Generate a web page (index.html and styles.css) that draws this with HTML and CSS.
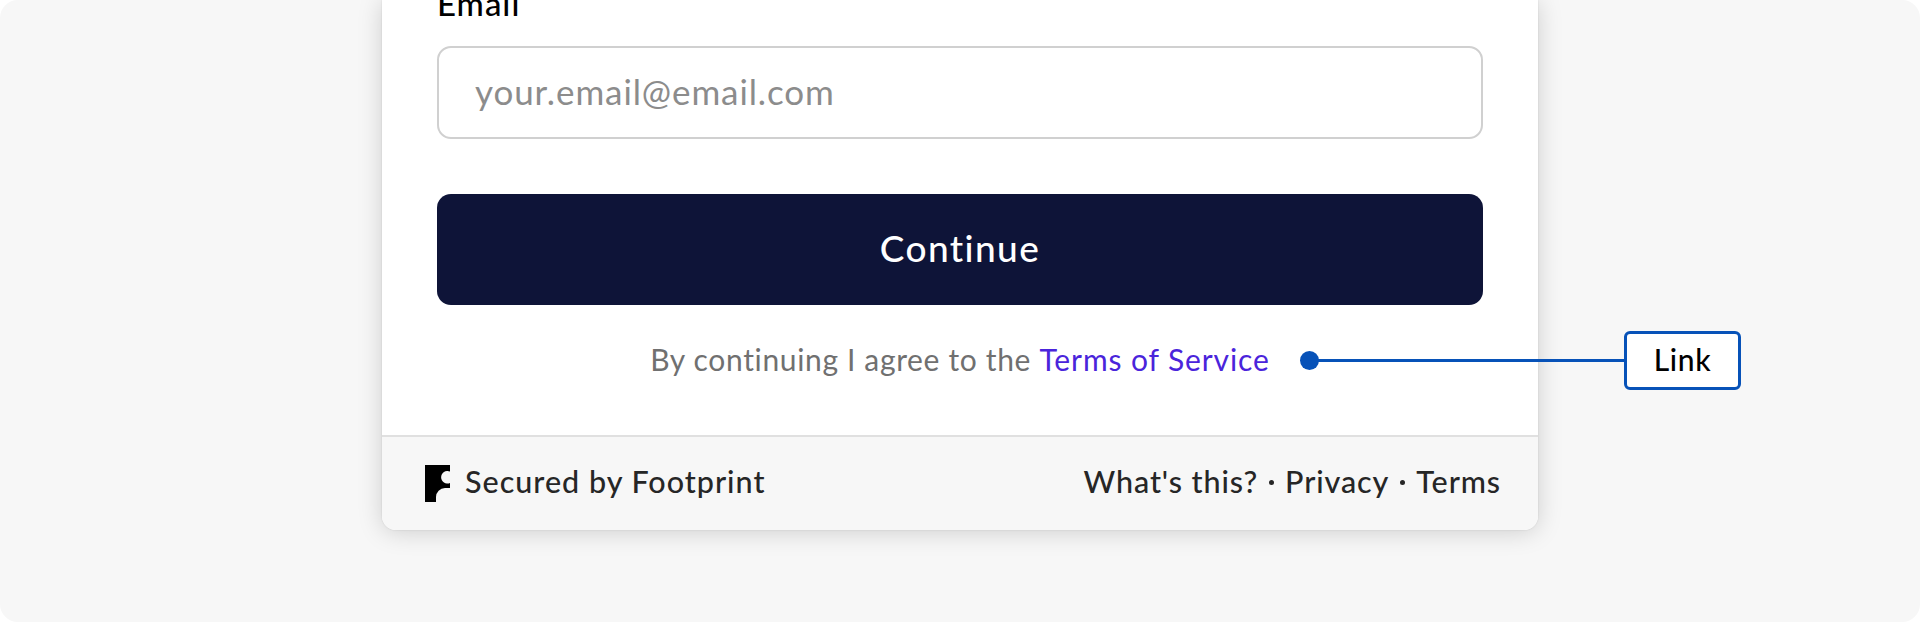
FILE: index.html
```
<!DOCTYPE html>
<html lang="en">
<head>
<meta charset="UTF-8" />
<title>Footprint</title>
<link rel="stylesheet" href="styles.css">
</head>
<body>
<main class="frame">
  <section class="card">
    <form class="form">
      <label class="label" for="email">Email</label>
      <input class="input" id="email" type="email" placeholder="your.email@email.com">
      <button class="button" type="button">Continue</button>
      <p class="agree">By continuing I agree to the <a class="agree-link" href="#">Terms of Service</a></p>
    </form>
    <footer class="footer">
      <div class="secured">
        <svg class="logo" viewBox="0 0 25 37" width="25" height="37">
          <path d="M0 0H25V6.5A6.3 6.3 0 1 0 25 18V23H20A9 9 0 0 0 11 32V37H0Z" />
        </svg>
        <span class="secured-text">Secured by Footprint</span>
      </div>
      <nav class="links">
        <a href="#">What's this?</a>
        <span class="dot"></span>
        <a href="#">Privacy</a>
        <span class="dot"></span>
        <a href="#">Terms</a>
      </nav>
    </footer>
  </section>
  <div class="callout">
    <span class="callout-dot"></span>
    <span class="callout-line"></span>
    <span class="callout-box">Link</span>
  </div>
</main>
</body>
</html>
```
FILE: styles.css
```
* {
  box-sizing: border-box;
}
body {
  margin: 0;
  background: #fff;
  font-family: Lato, "Open Sans", sans-serif;
}
a {
  color: inherit;
  text-decoration: none;
}
.frame {
  position: relative;
  height: 622px;
  overflow: hidden;
  background: #f7f7f7;
  border-radius: 18px;
}
.card {
  width: 1156px;
  height: 530px;
  margin-left: 382px;
  display: flex;
  flex-direction: column;
  background: #fff;
  border-radius: 0 0 14px 14px;
  box-shadow: 0 0 2px rgb(0 0 0 / 0.12), 0 2px 24px rgb(0 0 0 / 0.17);
}
.form {
  height: 435px;
  padding: 0 55px;
  display: flex;
  flex-direction: column;
}
.label {
  height: 46px;
  margin-top: -16px;
  margin-bottom: 16px;
  line-height: 38px;
  font-size: 33px;
  font-weight: 500;
  letter-spacing: 1px;
  color: #000;
}
.input {
  height: 93px;
  padding: 0 36px 3px;
  border: 2px solid #d0d0d0;
  border-radius: 14px;
  background: #fff;
  font-family: inherit;
  font-size: 35px;
  letter-spacing: 0.9px;
}
.input::placeholder {
  color: #8c8c8c;
}
.button {
  height: 111px;
  margin-top: 55px;
  padding: 0 0 4px;
  border: 0;
  border-radius: 14px;
  background: #0e1438;
  color: #fff;
  font-family: inherit;
  font-size: 37px;
  font-weight: 500;
  letter-spacing: 1.4px;
}
.agree {
  margin: 36px 0 0;
  line-height: 36px;
  font-size: 30px;
  letter-spacing: 0.65px;
  text-align: center;
  white-space: nowrap;
  color: #707070;
}
.agree-link {
  letter-spacing: 0.9px;
  color: #4a24db;
}
.footer {
  height: 95px;
  padding: 0 37px 0 43px;
  display: flex;
  align-items: center;
  justify-content: space-between;
  border-top: 2px solid #e0e0e0;
  border-radius: 0 0 14px 14px;
  background: #f7f7f7;
  font-size: 30.5px;
  font-weight: 500;
  letter-spacing: 0.9px;
  color: #262626;
}
.secured {
  display: flex;
  align-items: center;
  gap: 15px;
}
.secured-text {
  padding-bottom: 5px;
  letter-spacing: 1px;
}
.logo {
  fill: #000;
}
.links {
  padding-bottom: 5px;
  display: flex;
  align-items: center;
}
.dot {
  width: 5px;
  height: 5px;
  margin: 2px 11px 0;
  border-radius: 50%;
  background: #262626;
}
/* annotation drawn over the card edge */
.callout {
  position: absolute;
  left: 1300px;
  top: 331px;
  width: 441px;
  height: 59px;
  display: flex;
  align-items: center;
}
.callout-dot {
  width: 19px;
  height: 19px;
  border-radius: 50%;
  background: #0752b8;
}
.callout-line {
  flex: 1;
  height: 3px;
  margin: 0 -1px;
  background: #0752b8;
}
.callout-box {
  width: 117px;
  height: 59px;
  border: 3px solid #0752b8;
  border-radius: 6px;
  background: #fff;
  line-height: 51px;
  text-align: center;
  font-size: 30px;
  font-weight: 500;
  letter-spacing: 0.6px;
  color: #000;
}
```
